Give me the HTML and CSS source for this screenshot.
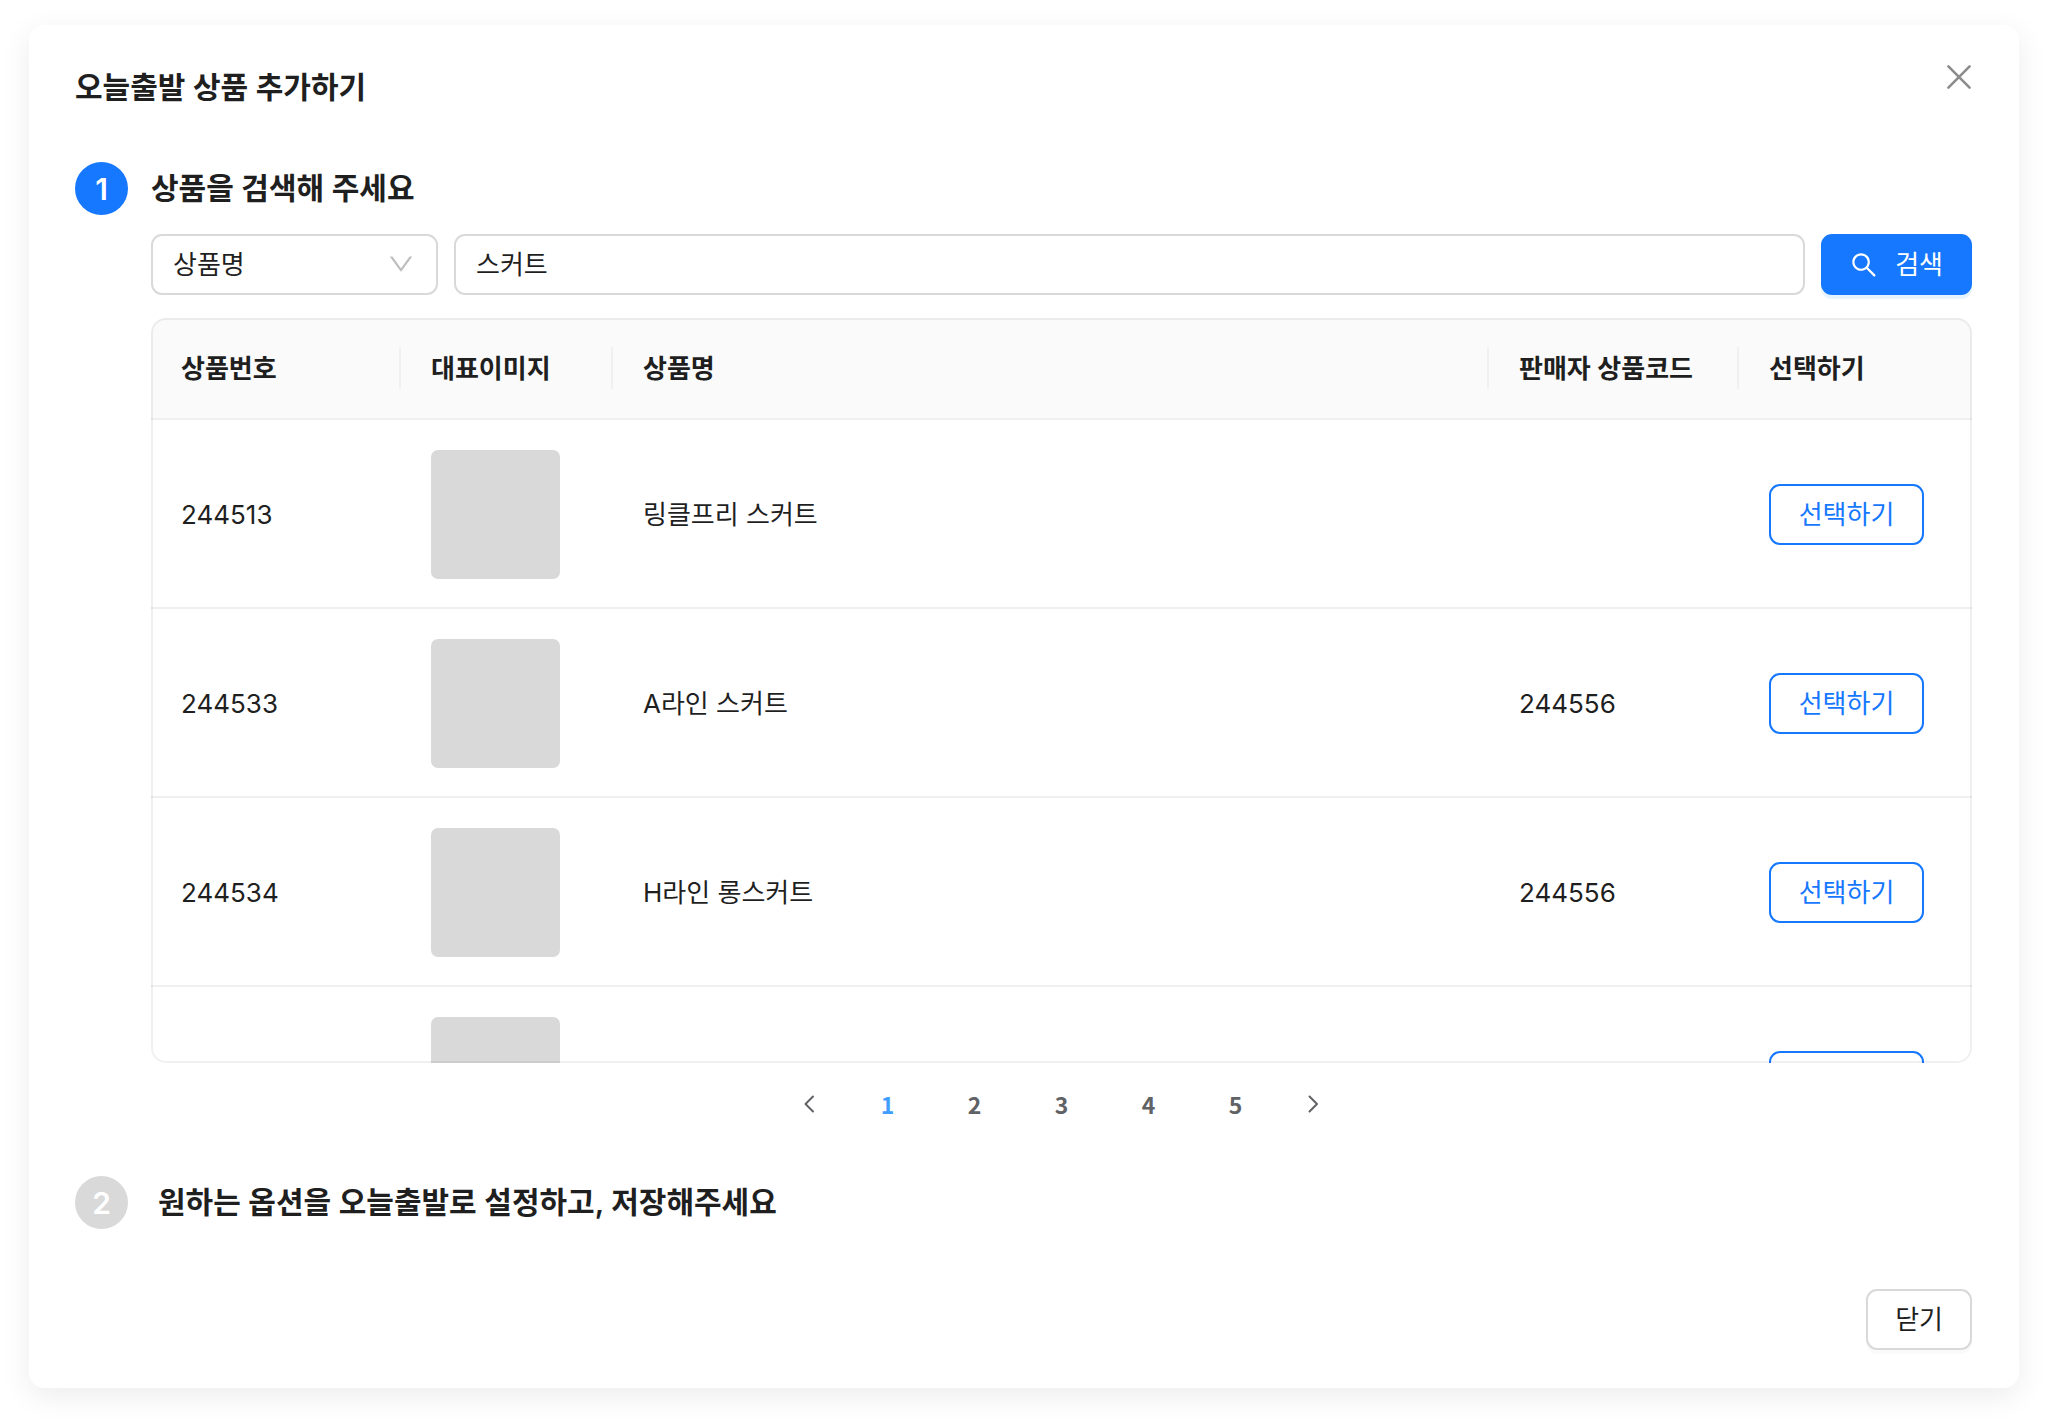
FILE: index.html
```html
<!DOCTYPE html>
<html lang="ko">
<head>
<meta charset="utf-8">
<meta name="viewport" content="width=device-width, initial-scale=1">
<title>오늘출발 상품 추가하기</title>
<link rel="stylesheet" href="styles.css">
</head>
<body>
<main class="modal">
  <header class="modal-header">
    <h1 class="heading">오늘출발 상품 추가하기</h1>
    <button class="close" type="button" aria-label="닫기">
      <svg viewBox="0 0 30 30" fill="none" stroke="currentColor" stroke-width="2.6" stroke-linecap="round"><path d="M4.400 4.400L25.600 25.600M25.600 4.400L4.400 25.600"/></svg>
    </button>
  </header>

  <section class="step">
    <div class="step-head">
      <span class="badge badge-active">1</span>
      <h2 class="heading">상품을 검색해 주세요</h2>
    </div>
    <div class="step-body">
      <form class="search">
        <div class="select-wrap">
          <select class="field select" aria-label="검색 기준">
            <option>상품명</option>
          </select>
          <svg class="select-arrow" viewBox="0 0 1024 1024" fill="currentColor"><path d="M884 256h-75c-5.100 0-9.900 2.500-12.900 6.600L512 654.200 227.900 262.600c-3-4.100-7.800-6.600-12.900-6.600h-75c-6.500 0-10.300 7.400-6.500 12.700l352.600 486.100c12.800 17.600 39 17.600 51.700 0l352.600-486.100c3.900-5.300.1-12.700-6.400-12.700z"/></svg>
        </div>
        <input class="field keyword" type="text" value="스커트" aria-label="검색어">
        <button class="btn btn-primary" type="button">
          <svg class="search-icon" viewBox="0 0 1024 1024" fill="currentColor"><path d="M909.6 854.5L649.9 594.8C690.2 542.7 712 479 712 412c0-80.2-31.3-155.4-87.9-212.1-56.6-56.7-132-87.9-212.1-87.9s-155.5 31.3-212.1 87.900C143.2 256.5 112 331.8 112 412c0 80.100 31.300 155.500 87.900 212.100C256.5 680.8 331.8 712 412 712c67 0 130.600-21.800 182.700-62l259.700 259.600a8.200 8.200 0 0011.600 0l43.600-43.500a8.200 8.200 0 000-11.600zM570.4 570.4C528 612.7 471.8 636 412 636s-116-23.300-158.400-65.600C211.3 528 188 471.8 188 412s23.300-116.100 65.600-158.400C296 211.3 352.2 188 412 188s116.100 23.200 158.400 65.600S636 352.2 636 412s-23.300 116.100-65.600 158.400z"/></svg>
          검색
        </button>
      </form>

      <div class="table-box">
        <div class="table-scroll">
          <table class="products">
            <colgroup>
              <col class="col-id"><col class="col-image"><col><col class="col-code"><col class="col-action">
            </colgroup>
            <thead>
              <tr><th scope="col">상품번호</th><th scope="col">대표이미지</th><th scope="col">상품명</th><th scope="col">판매자 상품코드</th><th scope="col">선택하기</th></tr>
            </thead>
            <tbody>
              <tr><td>244513</td><td><div class="thumb"></div></td><td>링클프리 스커트</td><td></td><td><button class="btn btn-outline" type="button">선택하기</button></td></tr>
              <tr><td>244533</td><td><div class="thumb"></div></td><td>A라인 스커트</td><td>244556</td><td><button class="btn btn-outline" type="button">선택하기</button></td></tr>
              <tr><td>244534</td><td><div class="thumb"></div></td><td>H라인 롱스커트</td><td>244556</td><td><button class="btn btn-outline" type="button">선택하기</button></td></tr>
              <tr><td></td><td><div class="thumb"></div></td><td></td><td></td><td><button class="btn btn-outline" type="button" aria-label="선택하기"></button></td></tr>
            </tbody>
          </table>
        </div>
      </div>

      <nav class="pagination" aria-label="페이지">
        <button class="page-arrow" type="button" aria-label="이전"><svg viewBox="0 0 20 20" fill="none" stroke="currentColor" stroke-width="2" stroke-linecap="round" stroke-linejoin="round"><path d="M14 2.500L6.500 10L14 17.500"/></svg></button>
        <button class="page page-current" type="button" aria-current="page">1</button>
        <button class="page" type="button">2</button>
        <button class="page" type="button">3</button>
        <button class="page" type="button">4</button>
        <button class="page" type="button">5</button>
        <button class="page-arrow" type="button" aria-label="다음"><svg viewBox="0 0 20 20" fill="none" stroke="currentColor" stroke-width="2" stroke-linecap="round" stroke-linejoin="round"><path d="M5.500 2.500L13 10L5.500 17.500"/></svg></button>
      </nav>
    </div>
  </section>

  <section class="step">
    <div class="step-head step-head-pending">
      <span class="badge">2</span>
      <h2 class="heading">원하는 옵션을 오늘출발로 설정하고, 저장해주세요</h2>
    </div>
  </section>

  <footer class="modal-footer">
    <button class="btn btn-default" type="button">닫기</button>
  </footer>
</main>
</body>
</html>
```
FILE: styles.css
```css
* {
  box-sizing: border-box;
}

body {
  margin: 0;
  padding: 25px 29px 34px;
  background: #fff;
  color: #1f1f1f;
  font-family: Inter, "Noto Sans CJK KR", sans-serif;
  font-size: 26px;
  line-height: 42px;
}

button,
input,
select {
  font: inherit;
  color: inherit;
}

button {
  cursor: pointer;
}

svg {
  display: block;
}

.modal {
  padding: 36px 47px 38px 46px;
  border-radius: 15px;
  background: #fff;
  box-shadow: 0 8px 30px rgba(0, 0, 0, 0.08);
}

.modal-header {
  display: flex;
  justify-content: space-between;
  align-items: flex-start;
  margin-bottom: 48px;
}

.heading {
  margin: 0;
  font-size: 30px;
  font-weight: 600;
  line-height: 53px;
}

.close {
  display: flex;
  align-items: center;
  justify-content: center;
  width: 26px;
  height: 32px;
  padding: 0;
  border: 0;
  background: none;
  color: #8c8c8c;
}

.close svg {
  flex: none;
  width: 30px;
  height: 30px;
}

.step-head {
  display: flex;
  align-items: center;
  gap: 23px;
}

.step-head-pending {
  gap: 30px;
}

.badge {
  display: flex;
  align-items: center;
  justify-content: center;
  width: 53px;
  height: 53px;
  border-radius: 50%;
  background: #d9d9d9;
  color: #fff;
  font-size: 30px;
  font-weight: 600;
}

.badge-active {
  background: #1677ff;
}

.step-body {
  margin: 19px 0 42px 76px;
}

.search {
  display: flex;
  gap: 16px;
  margin-bottom: 23px;
}

.field {
  height: 61px;
  padding: 0 20px;
  border: 2px solid #d9d9d9;
  border-radius: 11px;
  background: #fff;
  outline: none;
}

.select-wrap {
  position: relative;
  width: 287px;
}

.select {
  width: 100%;
  appearance: none;
}

.select-arrow {
  position: absolute;
  top: 15px;
  right: 22px;
  width: 30px;
  height: 30px;
  color: #bfbfbf;
  pointer-events: none;
}

.keyword {
  flex: 1;
  min-width: 0;
  padding-bottom: 4px;
}

.btn {
  height: 61px;
  padding: 0 27px;
  border: 2px solid #d9d9d9;
  border-radius: 11px;
  background: #fff;
}

.btn-primary {
  display: flex;
  align-items: center;
  gap: 16px;
  padding-left: 26px;
  border-color: #1677ff;
  background: #1677ff;
  color: #fff;
  box-shadow: 0 4px 0 rgba(5, 145, 255, 0.1);
}

.search-icon {
  width: 30px;
  height: 30px;
}

.btn-outline {
  display: block;
  min-width: 155px;
  border-color: #1677ff;
  color: #1677ff;
}

.btn-default {
  box-shadow: 0 4px 0 rgba(0, 0, 0, 0.02);
}

.table-box {
  position: relative;
}

.table-box::after {
  content: "";
  position: absolute;
  inset: 0;
  border: 2px solid rgba(5, 5, 5, 0.06);
  border-radius: 15px;
  pointer-events: none;
}

.table-scroll {
  max-height: 745px;
  overflow: auto;
  scrollbar-width: none;
  border-radius: 15px 15px 0 0;
}

.products {
  width: 100%;
  table-layout: fixed;
  border-collapse: separate;
  border-spacing: 0;
}

.col-id,
.col-code {
  width: 250px;
}

.col-image {
  width: 212px;
}

.col-action {
  width: 233px;
}

.products th,
.products td {
  padding: 30px 0 28px 30px;
  border-bottom: 2px solid #f0f0f0;
  text-align: left;
}

.products th {
  background: linear-gradient(#f0f0f0, #f0f0f0) right 50% / 2px 42px no-repeat #fafafa;
  font-weight: 600;
}

.products th:last-child {
  background: #fafafa;
}

.thumb {
  width: 129px;
  height: 129px;
  border-radius: 7px;
  background: #d9d9d9;
}

.pagination {
  display: flex;
  justify-content: center;
  margin-top: 11px;
  color: #606266;
}

.page,
.page-arrow {
  display: flex;
  align-items: center;
  justify-content: center;
  width: 87px;
  height: 60px;
  padding: 0;
  border: 0;
  background: none;
}

.page {
  font-family: "Noto Sans CJK KR", sans-serif;
  font-size: 23px;
  font-weight: 700;
}

.page-current {
  color: #409eff;
}

.page-arrow {
  width: 70px;
}

.page-arrow svg {
  width: 20px;
  height: 20px;
}

.modal-footer {
  display: flex;
  justify-content: flex-end;
  margin-top: 60px;
}
```
